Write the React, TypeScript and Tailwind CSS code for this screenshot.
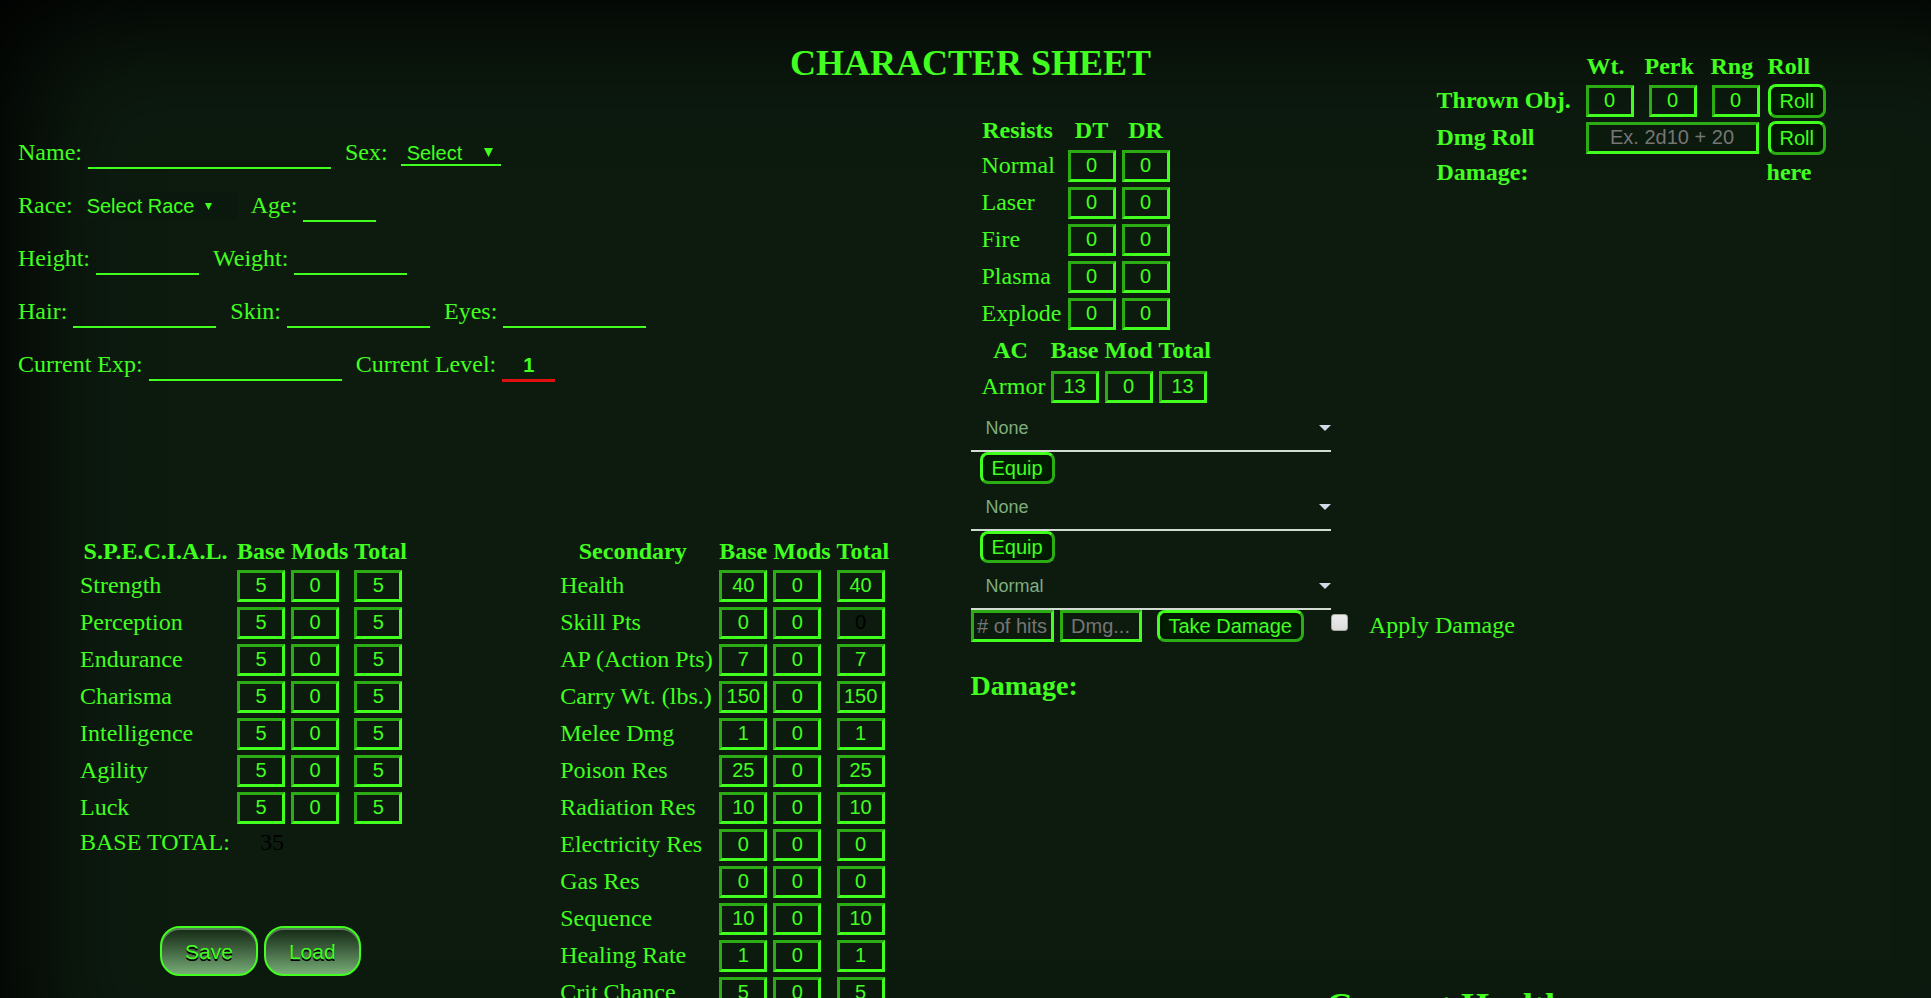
import type { ReactNode } from "react";

type Stat = { name: string; base: number; mod: number; total: number; dark?: boolean };

const special: Stat[] = [
  "Strength",
  "Perception",
  "Endurance",
  "Charisma",
  "Intelligence",
  "Agility",
  "Luck",
].map((name) => ({ name, base: 5, mod: 0, total: 5 }));

const secondary: Stat[] = [
  { name: "Health", base: 40, mod: 0, total: 40 },
  { name: "Skill Pts", base: 0, mod: 0, total: 0, dark: true },
  { name: "AP (Action Pts)", base: 7, mod: 0, total: 7 },
  { name: "Carry Wt. (lbs.)", base: 150, mod: 0, total: 150 },
  { name: "Melee Dmg", base: 1, mod: 0, total: 1 },
  { name: "Poison Res", base: 25, mod: 0, total: 25 },
  { name: "Radiation Res", base: 10, mod: 0, total: 10 },
  { name: "Electricity Res", base: 0, mod: 0, total: 0 },
  { name: "Gas Res", base: 0, mod: 0, total: 0 },
  { name: "Sequence", base: 10, mod: 0, total: 10 },
  { name: "Healing Rate", base: 1, mod: 0, total: 1 },
  { name: "Crit Chance", base: 5, mod: 0, total: 5 },
];

const resists = ["Normal", "Laser", "Fire", "Plasma", "Explode"];

const boxed =
  "block h-8 border-[3px] [border-style:inset] border-[#41ff1f] bg-transparent p-0 text-center font-['Liberation_Sans',sans-serif] text-xl leading-none outline-none placeholder:text-[#757575]";

function Box({ value, label, dark }: { value: number; label: string; dark?: boolean }) {
  return (
    <input
      aria-label={label}
      defaultValue={value}
      className={dark ? `${boxed} w-12 text-black` : `${boxed} w-12`}
    />
  );
}

function Th({ children }: { children?: ReactNode }) {
  return <th className="px-[3px] text-left font-bold whitespace-nowrap">{children}</th>;
}

function StatTable({
  title,
  titleClass,
  rows,
  footer,
}: {
  title: string;
  titleClass: string;
  rows: Stat[];
  footer?: ReactNode;
}) {
  return (
    <table className="border-collapse">
      <thead>
        <tr className="h-8">
          <th className={`${titleClass} text-center font-bold`}>{title}</th>
          <Th>Base</Th>
          <Th>Mods</Th>
          <Th>Total</Th>
        </tr>
      </thead>
      <tbody>
        {rows.map((r) => (
          <tr key={r.name} className="h-[37px]">
            <td className="pl-[3px] whitespace-nowrap">{r.name}</td>
            <td className="px-[3px]">
              <Box value={r.base} label={`${r.name} base`} />
            </td>
            <td className="px-[3px]">
              <Box value={r.mod} label={`${r.name} mods`} />
            </td>
            <td className="px-[3px]">
              <Box value={r.total} label={`${r.name} total`} dark={r.dark} />
            </td>
          </tr>
        ))}
        {footer}
      </tbody>
    </table>
  );
}

function Line({ id, label, width }: { id: string; label: string; width: string }) {
  return (
    <div className="flex items-baseline gap-1.5">
      <label htmlFor={id}>{label}</label>
      <input
        id={id}
        className={`${width} h-7 border-b-2 border-[#41ff1f] bg-transparent p-0 text-center font-['Liberation_Sans',sans-serif] text-xl leading-none outline-none`}
      />
    </div>
  );
}

function PushButton({ children, height }: { children: ReactNode; height: string }) {
  return (
    <button
      className={`${height} block rounded-lg border-[3px] [border-style:outset] border-[#41ff1f] bg-[#021d02] px-[9px] font-['Liberation_Sans',sans-serif] text-xl leading-none font-normal whitespace-nowrap shadow-[inset_0_0_6px_#000f00]`}
    >
      {children}
    </button>
  );
}

function WideSelect({ label, value }: { label: string; value: string }) {
  return (
    <div className="relative w-[360px]">
      <select
        aria-label={label}
        className="block h-[47px] w-full appearance-none border-b-2 border-[#d3dcd3] bg-transparent px-[15px] font-['Liberation_Sans',sans-serif] text-lg text-[#7fad7f] outline-none"
      >
        <option>{value}</option>
      </select>
      <svg viewBox="0 0 12 6" className="pointer-events-none absolute top-5 right-0 h-1.5 w-3 fill-[#d3d9e6]">
        <path d="M0 0h12L6 6z" />
      </svg>
    </div>
  );
}

function InfoRow({ children }: { children: ReactNode }) {
  return <div className="flex h-[53px] items-baseline gap-3.5">{children}</div>;
}

const pill =
  "h-[50px] rounded-[20px] border-2 border-[#41ff1f] bg-linear-to-b from-[#142814] to-[#78ad78] px-[23px] font-['Liberation_Sans',sans-serif] text-[21px] leading-none [text-shadow:0_2px_0_#000] shadow-[inset_0_2px_0_#5c7a5c]";

export default function App() {
  return (
    <main className="h-screen overflow-hidden bg-[#0d1b0f] font-['Liberation_Serif',serif] text-2xl leading-[27px] text-[#41ff1f] shadow-[inset_65px_65px_120px_-40px_#000]">
      <div className="grid grid-cols-[50%_24%_1fr] grid-rows-[114px_auto] pl-2.5">
        <h1 className="col-span-3 col-start-1 row-start-1 pt-[43px] text-center text-4xl leading-[41px] font-bold">
          CHARACTER SHEET
        </h1>

        <section className="col-start-1 row-start-2 pt-[25px]">
          <div className="pl-2">
            <InfoRow>
              <Line id="name" label="Name:" width="w-[243px]" />
              <div className="flex items-baseline gap-[13px]">
                <label htmlFor="sex">Sex:</label>
                <div className="relative">
                  <select
                    id="sex"
                    className="h-6 w-[100px] appearance-none border-b-2 border-[#41ff1f] bg-transparent px-1.5 font-['Liberation_Sans',sans-serif] text-xl leading-none outline-none"
                  >
                    <option>Select</option>
                  </select>
                  <svg viewBox="0 0 10 10" className="pointer-events-none absolute top-[9px] right-2 size-[9px] fill-current">
                    <path d="M0 0h10L5 10z" />
                  </svg>
                </div>
              </div>
            </InfoRow>
            <InfoRow>
              <div className="flex items-baseline gap-3.5">
                <label htmlFor="race">Race:</label>
                <div className="relative">
                  <select
                    id="race"
                    className="h-7 w-[150px] appearance-none bg-[#0b180d] p-0 font-['Liberation_Sans',sans-serif] text-xl leading-none outline-none"
                  >
                    <option>Select Race</option>
                  </select>
                  <svg viewBox="0 0 7 7" className="pointer-events-none absolute top-[11px] left-[118px] size-[7px] fill-current">
                    <path d="M0 0h7L3.5 7z" />
                  </svg>
                </div>
              </div>
              <Line id="age" label="Age:" width="w-[73px]" />
            </InfoRow>
            <InfoRow>
              <Line id="height" label="Height:" width="w-[103px]" />
              <Line id="weight" label="Weight:" width="w-[113px]" />
            </InfoRow>
            <InfoRow>
              <Line id="hair" label="Hair:" width="w-[143px]" />
              <Line id="skin" label="Skin:" width="w-[143px]" />
              <Line id="eyes" label="Eyes:" width="w-[143px]" />
            </InfoRow>
            <InfoRow>
              <Line id="exp" label="Current Exp:" width="w-[193px]" />
              <div className="flex items-baseline gap-1.5">
                <label htmlFor="level">Current Level:</label>
                <input
                  id="level"
                  defaultValue="1"
                  className="h-[29px] w-[53px] border-b-[3px] border-[#e01010] bg-transparent p-0 text-center font-['Liberation_Sans',sans-serif] text-xl leading-none font-bold outline-none"
                />
              </div>
            </InfoRow>
          </div>

          <div className="grid grid-cols-2 pt-[131px]">
            <div className="pl-[67px]">
              <StatTable
                title="S.P.E.C.I.A.L."
                titleClass="w-[157px] px-[3px]"
                rows={special}
                footer={
                  <tr className="h-8">
                    <td className="pl-[3px] whitespace-nowrap">BASE TOTAL:</td>
                    <td colSpan={3} className="pl-[26px] text-black">
                      35
                    </td>
                  </tr>
                }
              />
              <div className="flex gap-1.5 pt-[68px] pl-[83px]">
                <button className={pill}>Save</button>
                <button className={pill}>Load</button>
              </div>
            </div>
            <div className="pl-[67px]">
              <StatTable title="Secondary" titleClass="w-[159px] pr-2" rows={secondary} />
            </div>
          </div>
        </section>

        <section className="col-start-2 row-start-2">
          <table className="ml-2 border-collapse">
            <thead>
              <tr className="h-[33px]">
                <th className="w-[86px] pr-2 text-center font-bold">Resists</th>
                <th className="px-[3px] text-center font-bold">DT</th>
                <th className="px-[3px] text-center font-bold">DR</th>
              </tr>
            </thead>
            <tbody>
              {resists.map((r) => (
                <tr key={r} className="h-[37px]">
                  <td className="pl-[3px]">{r}</td>
                  <td className="px-[3px]">
                    <Box value={0} label={`${r} DT`} />
                  </td>
                  <td className="px-[3px]">
                    <Box value={0} label={`${r} DR`} />
                  </td>
                </tr>
              ))}
            </tbody>
          </table>
          <table className="ml-2 border-collapse">
            <thead>
              <tr className="h-9">
                <th className="w-[69px] pr-2 pl-[3px] text-center font-bold">AC</th>
                <Th>Base</Th>
                <Th>Mod</Th>
                <Th>Total</Th>
              </tr>
            </thead>
            <tbody>
              <tr className="h-[37px]">
                <td className="pl-[3px]">Armor</td>
                <td className="px-[3px]">
                  <Box value={13} label="Armor base" />
                </td>
                <td className="px-[3px]">
                  <Box value={0} label="Armor mod" />
                </td>
                <td className="px-[3px]">
                  <Box value={13} label="Armor total" />
                </td>
              </tr>
            </tbody>
          </table>

          <WideSelect label="Armor worn" value="None" />
          <div className="pl-[9px]">
            <PushButton height="h-8">Equip</PushButton>
          </div>
          <WideSelect label="Helmet worn" value="None" />
          <div className="pl-[9px]">
            <PushButton height="h-8">Equip</PushButton>
          </div>
          <WideSelect label="Damage type" value="Normal" />
          <div className="flex">
            <input aria-label="Number of hits" placeholder="# of hits" className={`${boxed} w-[83px]`} />
            <input aria-label="Damage dealt" placeholder="Dmg..." className={`${boxed} ml-1.5 w-[82px]`} />
            <div className="ml-[15px]">
              <PushButton height="h-8">Take Damage</PushButton>
            </div>
            <label className="ml-[27px] flex gap-[21px] whitespace-nowrap">
              <input
                type="checkbox"
                className="mt-1 h-[17px] w-[17px] appearance-none rounded-[3px] border border-[#a0a8a0] bg-linear-to-b from-[#ececec] to-[#dcdcdc]"
              />
              <span className="pt-0.5">Apply Damage</span>
            </label>
          </div>
          <p className="pt-[28px] text-[28px] leading-8 font-bold">Damage:</p>
        </section>

        <section className="col-start-3 row-span-2 row-start-1 pt-[50px]">
          <table className="ml-0.5 border-collapse font-bold">
            <thead>
              <tr className="h-8">
                <td className="w-[149px]" />
                <th className="w-[62px] px-1 text-left">Wt.</th>
                <th className="w-[66px] text-left">Perk</th>
                <th className="w-[54px] text-left">Rng</th>
                <th className="px-[3px] text-left">Roll</th>
              </tr>
            </thead>
            <tbody>
              <tr className="h-[37px]">
                <th className="pl-[3px] text-left whitespace-nowrap">Thrown Obj.</th>
                <td colSpan={3} className="pl-[3px]">
                  <div className="flex gap-[15px] font-normal">
                    <Box value={0} label="Thrown weight" />
                    <Box value={0} label="Thrown perk" />
                    <Box value={0} label="Thrown range" />
                  </div>
                </td>
                <td className="pl-[3px]">
                  <PushButton height="h-[34px]">Roll</PushButton>
                </td>
              </tr>
              <tr className="h-[37px]">
                <th className="pl-[3px] text-left">Dmg Roll</th>
                <td colSpan={3} className="pl-[3px]">
                  <input aria-label="Damage roll" placeholder="Ex. 2d10 + 20" className={`${boxed} w-[173px] font-normal`} />
                </td>
                <td className="pl-[3px]">
                  <PushButton height="h-[34px]">Roll</PushButton>
                </td>
              </tr>
              <tr className="h-[33px]">
                <th className="pl-[3px] text-left">Damage:</th>
                <td colSpan={3} />
                <td className="pl-0.5">here</td>
              </tr>
            </tbody>
          </table>
        </section>

        <h2 className="col-span-2 col-start-2 row-start-2 mt-[872px] h-[41px] pr-2.5 text-center text-4xl leading-[41px] font-bold">
          Current Health
        </h2>
      </div>
    </main>
  );
}
